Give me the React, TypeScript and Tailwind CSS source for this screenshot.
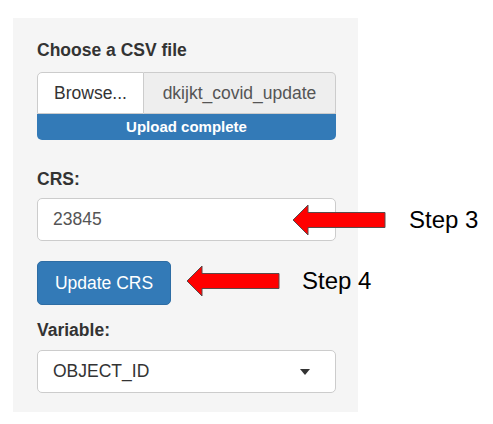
import React from "react";

function Arrow() {
  return (
    <svg viewBox="0 0 94 32" width="94" height="32" className="shrink-0">
      <path
        d="M1 16 L16 1 L16 8.5 L93 8.5 L93 23.5 L16 23.5 L16 31 Z"
        fill="#ff0000"
        stroke="#5a4a4a"
        strokeWidth="1"
        strokeLinejoin="miter"
      />
    </svg>
  );
}

function Callout({ label, gap, className }: { label: string; gap: string; className: string }) {
  return (
    <div className={`absolute flex items-center ${gap} ${className}`}>
      <Arrow />
      <span className="text-[24px] leading-[28px] text-black">{label}</span>
    </div>
  );
}

export default function App() {
  return (
    <div
      className="relative w-[493px] h-[424px] bg-white overflow-hidden"
      style={{ fontFamily: '"Liberation Sans", Arial, sans-serif' }}
    >
      <div className="ml-[13px] mt-[18px] w-[345px] h-[394px] bg-[#f5f5f5] pt-[20px] pl-[24px] pr-[22px] text-[#333]">
        <label className="block text-[17.5px] font-bold leading-[25px] mb-[9px]">
          Choose a CSV file
        </label>
        <div className="flex h-[42px]">
          <div className="w-[107px] flex items-center justify-center bg-white border border-[#ccc] rounded-tl-[5px] text-[17.5px] text-[#333]">
            Browse...
          </div>
          <div className="flex-1 flex items-center justify-center bg-[#eee] border border-l-0 border-[#ccc] rounded-tr-[5px] text-[17.5px] text-[#555]">
            dkijkt_covid_update
          </div>
        </div>
        <div className="h-[26px] bg-[#337ab7] rounded-b-[5px] flex items-center justify-center text-white text-[15px] font-bold">
          Upload complete
        </div>

        <label className="block text-[17.5px] font-bold leading-[25px] mt-[27px] mb-[6px]">
          CRS:
        </label>
        <div className="h-[43px] bg-white border border-[#ccc] rounded-[5px] flex items-center pl-[15px] text-[17.5px] text-[#555]">
          23845
        </div>

        <button className="mt-[20px] h-[44px] w-[134px] bg-[#337ab7] border border-[#2e6da4] rounded-[5px] text-white text-[17.5px]">
          Update CRS
        </button>

        <label className="block text-[17.5px] font-bold leading-[25px] mt-[13px] mb-[7px]">
          Variable:
        </label>
        <div className="h-[43px] bg-white border border-[#ccc] rounded-[5px] flex items-center justify-between pl-[15px] pr-[25px] text-[17.5px] text-[#333]">
          <span>OBJECT_ID</span>
          <span className="w-0 h-0 border-l-[5px] border-r-[5px] border-t-[6px] border-l-transparent border-r-transparent border-t-[#333]" />
        </div>
      </div>

      <Callout label="Step 3" gap="gap-[23px]" className="left-[292px] top-[204px]" />
      <Callout label="Step 4" gap="gap-[22px]" className="left-[186px] top-[265px]" />
    </div>
  );
}
